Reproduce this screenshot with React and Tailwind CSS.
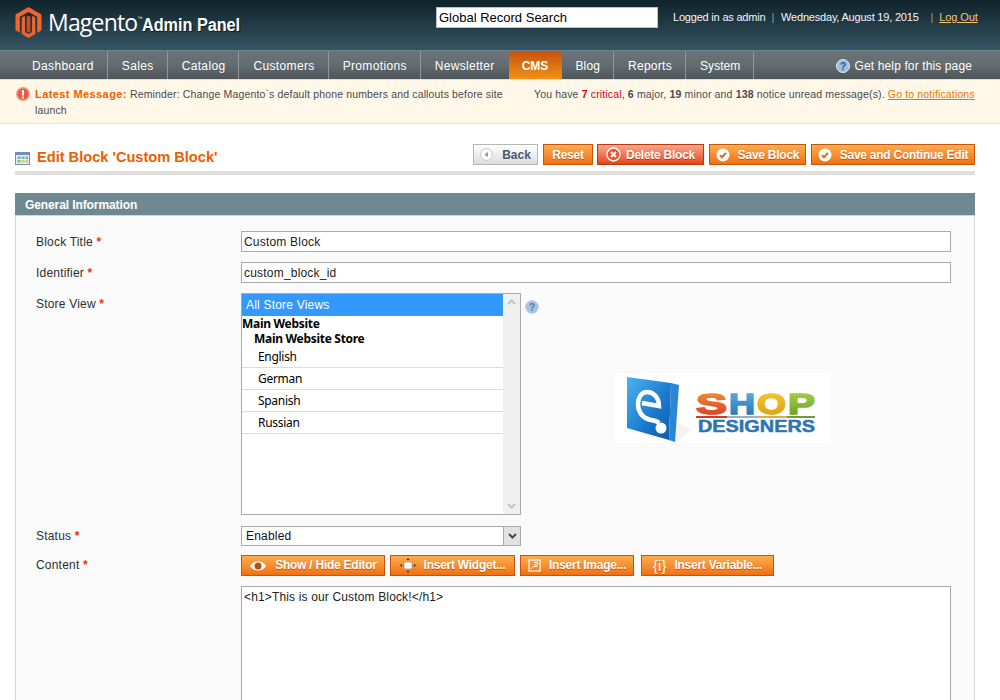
import React from "react";

function Check() {
  return (
    <svg width="14" height="14" viewBox="0 0 14 14" className="shrink-0">
      <circle cx="7" cy="7" r="6.500" fill="#fff" />
      <path d="M4 7.200l2 2 4-4.400" fill="none" stroke="#e8690f" strokeWidth="2" />
    </svg>
  );
}

function OrangeBtn({ children, icon, className = "" }) {
  return (
    <div className={"h-[21px] flex items-center justify-center gap-[8px] border border-[#c2560c] bg-gradient-to-b from-[#fdac4c] to-[#f0700d] text-white font-bold text-[12px] tracking-[-0.25px] whitespace-nowrap [text-shadow:0_1px_0_#c2560c] " + className}>
      {icon}
      <span>{children}</span>
    </div>
  );
}

function Label({ children, className = "" }) {
  return (
    <div className={"w-[205px] shrink-0 text-[12px] tracking-[0.2px] text-[#2f2f2f] " + className}>
      {children} <span className="text-[#eb340a] font-bold">*</span>
    </div>
  );
}

function NavItem({ children, className = "tracking-[0.35px]" }) {
  return (
    <div className={"pl-[14px] pr-[13px] pt-[1px] h-[28px] flex items-center border-r border-[#8e989c] text-[12px] text-white " + className}>
      {children}
    </div>
  );
}

function Logo() {
  return (
    <svg width="27" height="31" viewBox="0 0 28 32" className="shrink-0">
      <path d="M14 0L27.500 7.600V24L23 26.700V10L14 5 5 10V26.700L.5 24V7.600z" fill="#f1642a" />
      <path d="M14 32L7 28V10.800L10.300 9V26L14 28l3.700-2V9L21 10.800V28z" fill="#f1642a" />
      <path d="M12.200 9.500h3.600V25l-1.800 1-1.800-1z" fill="#e0481b" />
    </svg>
  );
}

function ShopLogo() {
  const fam = "'Liberation Sans', sans-serif";
  return (
    <svg width="215" height="70" viewBox="0 0 215 70" className="bg-white">
      <defs>
        <linearGradient id="box" x1="0" y1="0" x2="1" y2="1">
          <stop offset="0" stopColor="#4db4ef" />
          <stop offset="0.6" stopColor="#1878cc" />
          <stop offset="1" stopColor="#0f5ca8" />
        </linearGradient>
        <linearGradient id="sh" x1="0" y1="0" x2="0" y2="1">
          <stop offset="0" stopColor="#f59a3a" />
          <stop offset="1" stopColor="#d8341e" />
        </linearGradient>
        <linearGradient id="hh" x1="0" y1="0" x2="0" y2="1">
          <stop offset="0" stopColor="#5fb6e8" />
          <stop offset="1" stopColor="#1c6fb5" />
        </linearGradient>
        <linearGradient id="oo" x1="0" y1="0" x2="0" y2="1">
          <stop offset="0" stopColor="#f7cf36" />
          <stop offset="1" stopColor="#dc9a10" />
        </linearGradient>
        <linearGradient id="pp" x1="0" y1="0" x2="0" y2="1">
          <stop offset="0" stopColor="#b6d64a" />
          <stop offset="1" stopColor="#5e9c24" />
        </linearGradient>
      </defs>
      <path d="M30 60L62 69 76 56 62 50z" fill="#d8d8d8" opacity="0.3" />
      <path d="M12 4L56 10 54 67 12 55z" fill="url(#box)" />
      <path d="M56 10L64 12 60 69 54 67z" fill="#2a86d6" />
      <path d="M27 30L44 33C44 24 38 19 32 19 26 19 23 25 23 31 23 40 29 46 36 47 40 47.500 42 48 44 50" fill="none" stroke="#fff" strokeWidth="4.500" />
      <circle cx="46" cy="55" r="5.500" fill="#fff" />
      <g fontFamily={fam} fontWeight="700" fontSize="30" strokeWidth="1.600">
        <text x="81" y="41" textLength="31" lengthAdjust="spacingAndGlyphs" fill="url(#sh)" stroke="url(#sh)">S</text>
        <text x="114" y="41" textLength="26" lengthAdjust="spacingAndGlyphs" fill="url(#hh)" stroke="url(#hh)">H</text>
        <text x="142" y="41" textLength="29" lengthAdjust="spacingAndGlyphs" fill="url(#oo)" stroke="url(#oo)">O</text>
        <text x="173" y="41" textLength="27" lengthAdjust="spacingAndGlyphs" fill="url(#pp)" stroke="url(#pp)">P</text>
      </g>
      <rect x="81" y="43" width="31" height="2" fill="#c8402a" />
      <rect x="112" y="43" width="30" height="2" fill="#9ab0c0" />
      <rect x="142" y="43" width="30" height="2" fill="#d2b050" />
      <rect x="172" y="43" width="28" height="2" fill="#6e9c3a" />
      <text x="83" y="59" fontFamily={fam} fontWeight="700" fontSize="16" textLength="117" lengthAdjust="spacingAndGlyphs" fill="#2c74b4" stroke="#2c74b4" strokeWidth="0.500">DESIGNERS</text>
    </svg>
  );
}

export default function App() {
  return (
    <div className="w-[1000px] h-[700px] overflow-hidden flex flex-col bg-white font-['Liberation_Sans',Arial,sans-serif]">
      {/* Header */}
      <div className="h-[51px] shrink-0 flex bg-gradient-to-b from-[#10232b] to-[#365563] border-b border-[#6a848d]">
        <div className="w-[436px] pl-[15px] pt-[7px] flex items-start gap-[6px]">
          <Logo />
          <div className="flex items-baseline text-white">
            <span className="font-['Open_Sans',sans-serif] text-[23px] leading-[30px] tracking-[-0.8px]">Magento</span>
            <span className="text-[5px] self-start mt-[8px]">™</span>
            <span className="font-bold text-[18px] origin-left scale-x-[0.9] whitespace-nowrap [text-shadow:1px_1px_1px_#0b1a20]">Admin Panel</span>
          </div>
        </div>
        <div className="w-[222px] h-[21px] mt-[7px] bg-white border border-[#b9c3c7] pl-[2px] flex items-center text-[13px] text-black">Global Record Search</div>
        <div className="ml-[15px] mt-[11px] flex text-[11px] leading-[13px] text-[#f2f5f6] tracking-[-0.2px] whitespace-nowrap">
          <span>Logged in as admin</span>
          <span className="ml-[6px] mr-[7px] text-[#8ba0a8]">|</span>
          <span>Wednesday, August 19, 2015</span>
          <span className="ml-[12px] mr-[6px] text-[#8ba0a8]">|</span>
          <span className="text-[#f6c56b] underline tracking-[-0.1px]">Log Out</span>
        </div>
      </div>

      {/* Nav */}
      <div className="h-[29px] shrink-0 flex items-start pl-[18px] pr-[28px] bg-gradient-to-b from-[#697378] via-[#626c71] to-[#4e5559] border-b border-[#e4e0d4]">
        <NavItem>Dashboard</NavItem>
        <NavItem>Sales</NavItem>
        <NavItem>Catalog</NavItem>
        <NavItem>Customers</NavItem>
        <NavItem>Promotions</NavItem>
        <div className="pl-[14px] pr-[14px] pt-[1px] h-[28px] flex items-center text-[12px] tracking-[0.3px] text-white">Newsletter</div>
        <div className="w-[53px] pt-[1px] h-[28px] flex items-center justify-center bg-gradient-to-b from-[#c9500c] to-[#ef9118] text-white font-bold text-[12px]">CMS</div>
        <NavItem className="tracking-[0.1px]">Blog</NavItem>
        <NavItem className="tracking-[0.3px]">Reports</NavItem>
        <NavItem className="tracking-[0.05px]">System</NavItem>
        <div className="ml-auto pt-[1px] h-[28px] flex items-center gap-[5px] text-[12px] tracking-[0.12px] text-white">
          <svg width="14" height="14" viewBox="0 0 14 14">
            <circle cx="7" cy="7" r="6.500" fill="#9dbde2" stroke="#dfe9f5" />
            <text x="7" y="10.500" textAnchor="middle" fontSize="10" fontWeight="700" fill="#2b5a93" fontFamily="'Liberation Sans', sans-serif">?</text>
          </svg>
          <span>Get help for this page</span>
        </div>
      </div>

      {/* Notice */}
      <div className="h-[44px] shrink-0 flex bg-[#fff8e9] border-b border-[#ece6d6] pl-[16px] pr-[25px] pt-[6px] text-[10.5px] leading-[16px] tracking-[0.15px] text-[#494949]">
        <svg width="14" height="14" viewBox="0 0 14 14" className="shrink-0 mt-[1px]">
          <circle cx="7" cy="7" r="7" fill="#ec9c8a" />
          <circle cx="7" cy="7" r="5.500" fill="#ee5a3d" />
          <rect x="6" y="3" width="2" height="5.500" fill="#fff" />
          <rect x="6" y="9.500" width="2" height="2" fill="#fff" />
        </svg>
        <div className="w-[499px] pr-[20px] shrink-0 ml-[5px]">
          <span className="font-bold text-[#eb5e00] text-[11px] tracking-[0.42px]">Latest Message:</span> Reminder: Change Magento`s default phone numbers and callouts before site launch
        </div>
        <div className="whitespace-nowrap tracking-[0.15px]">
          You have <b className="text-[#d70017]">7</b> <span className="text-[#d70017]">critical</span>, <b>6</b> major, <b>19</b> minor and <b>138</b> notice unread message(s). <span className="text-[#ea7601] underline">Go to notifications</span>
        </div>
      </div>

      {/* Main */}
      <div className="flex-1 min-h-0 flex flex-col pl-[15px] pr-[25px] pt-[20px]">
        <div className="h-[31px] shrink-0 flex items-start border-b-4 border-[#dfdfdf]">
          <div className="flex items-center gap-[7px] h-[28px]">
            <svg width="15" height="13" viewBox="0 0 15 13">
              <rect x="0.500" y="0.500" width="14" height="12" fill="#e7eef7" stroke="#6f90bd" />
              <rect x="1" y="1" width="13" height="2" fill="#6f90bd" />
              <rect x="2.500" y="4.500" width="3" height="2.500" fill="#76a8d8" />
              <rect x="6.500" y="4.500" width="3" height="2.500" fill="#8cbb66" />
              <rect x="10.500" y="4.500" width="2.500" height="2.500" fill="#76a8d8" />
              <rect x="2.500" y="8" width="3" height="2.500" fill="#8cbb66" />
              <rect x="6.500" y="8" width="3" height="2.500" fill="#e9c75f" />
              <rect x="10.500" y="8" width="2.500" height="2.500" fill="#e9c75f" />
            </svg>
            <span className="text-[#eb5e00] font-bold text-[14.6px]">Edit Block 'Custom Block'</span>
          </div>
          <div className="ml-auto flex gap-[5px]">
            <div className="w-[65px] h-[21px] flex items-center justify-center gap-[9px] border border-[#b6b6b6] bg-gradient-to-b from-[#ffffff] to-[#dcdcdc] text-[#4c5a66] font-bold text-[12px]">
              <svg width="13" height="13" viewBox="0 0 13 13">
                <circle cx="6.500" cy="6.500" r="6" fill="#fbfbfb" stroke="#c8c8c8" />
                <path d="M8 3.800v5.400L4.400 6.500z" fill="#9a9a9a" />
              </svg>
              <span>Back</span>
            </div>
            <OrangeBtn className="w-[50px]">Reset</OrangeBtn>
            <div className="w-[107px] ml-[-1px] h-[21px] flex items-center justify-center gap-[5px] border border-[#b93a0c] bg-gradient-to-b from-[#f8a58b] to-[#e5420b] text-white font-bold text-[12px] tracking-[-0.25px] whitespace-nowrap [text-shadow:0_1px_0_#b93a0c]">
              <svg width="15" height="15" viewBox="0 0 15 15">
                <circle cx="7.500" cy="7.500" r="6.500" fill="#e8552a" stroke="#fff" strokeWidth="1.400" />
                <path d="M5 5l5 5M10 5l-5 5" stroke="#fff" strokeWidth="2" />
              </svg>
              <span>Delete Block</span>
            </div>
            <OrangeBtn className="w-[97px]" icon={<Check />}>Save Block</OrangeBtn>
            <OrangeBtn className="w-[164px]" icon={<Check />}>Save and Continue Edit</OrangeBtn>
          </div>
        </div>

        <div className="mt-[18px] h-[22px] shrink-0 flex items-center pl-[10px] pt-[1px] bg-[#6f8992] text-white font-bold text-[12px] tracking-[-0.1px]">General Information</div>

        <div className="flex-1 min-h-0 flex flex-col border-x border-t border-[#d6d6d6] bg-[#fafafa] pl-[20px] pr-[23px] pt-[15px]">
          <div className="flex h-[21px] leading-[19px]">
            <Label className="pt-[2px]">Block Title</Label>
            <div className="flex-1 h-[21px] bg-white border border-[#aaaaaa] pl-[2px] pt-[1px] flex items-center text-[12px] tracking-[0.2px] text-[#222]">Custom Block</div>
          </div>
          <div className="flex h-[21px] mt-[10px] leading-[19px]">
            <Label className="pt-[2px]">Identifier</Label>
            <div className="flex-1 h-[21px] bg-white border border-[#aaaaaa] pl-[2px] pt-[1px] flex items-center text-[12px] tracking-[0.2px] text-[#222]">custom_block_id</div>
          </div>
          <div className="flex h-[222px] mt-[10px] leading-[19px]">
            <Label className="pt-[2px]">Store View</Label>
            <div className="w-[280px] h-[222px] shrink-0 flex bg-white border border-[#aaaaaa]">
              <div className="flex-1 font-['Noto_Sans',sans-serif] text-[12px] tracking-[-0.3px] leading-[15px] text-black">
                <div className="h-[22px] bg-[#3399ff] text-white pl-[4px] flex items-center font-['Liberation_Sans',sans-serif] text-[12px] tracking-[0.2px]">All Store Views</div>
                <div className="font-bold">Main Website</div>
                <div className="pl-[12px] font-bold">Main Website Store</div>
                {["English", "German", "Spanish", "Russian"].map((s) => (
                  <div key={s} className="h-[22px] pl-[16px] flex items-center border-b border-[#dcdcdc]">{s}</div>
                ))}
              </div>
              <div className="w-[17px] shrink-0 flex flex-col justify-between items-center bg-[#f0f0f0] py-[5px]">
                <svg width="9" height="6" viewBox="0 0 9 6"><path d="M1 5l3.500-3.500L8 5" fill="none" stroke="#c2c2c2" strokeWidth="2" /></svg>
                <svg width="9" height="6" viewBox="0 0 9 6"><path d="M1 1l3.500 3.500L8 1" fill="none" stroke="#c2c2c2" strokeWidth="2" /></svg>
              </div>
            </div>
            <svg width="14" height="14" viewBox="0 0 14 14" className="ml-[4px] mt-[7px] shrink-0">
              <circle cx="7" cy="7" r="6.500" fill="#a9c1e2" stroke="#c6d6ec" />
              <text x="7" y="10.500" textAnchor="middle" fontSize="10" fontWeight="700" fill="#4f78ad" fontFamily="'Liberation Sans', sans-serif">?</text>
            </svg>
            <div className="ml-[76px] mt-[80px] self-start shrink-0 flex"><ShopLogo /></div>
          </div>
          <div className="flex h-[20px] mt-[11px] leading-[19px]">
            <Label className="pt-[1px]">Status</Label>
            <div className="w-[280px] h-[20px] flex bg-white border border-[#aaaaaa]">
              <div className="flex-1 pl-[4px] flex items-center text-[12px] tracking-[0.2px] text-[#111]">Enabled</div>
              <div className="w-[17px] bg-[#e2e2e2] border-l border-[#aaaaaa] flex items-center justify-center">
                <svg width="9" height="6" viewBox="0 0 9 6"><path d="M1 1l3.500 3.500L8 1" fill="none" stroke="#4a4a4a" strokeWidth="2" /></svg>
              </div>
            </div>
          </div>
          <div className="flex h-[21px] mt-[9px] leading-[19px]">
            <Label className="pt-[1px]">Content</Label>
            <div className="flex gap-[5px]">
              <OrangeBtn className="w-[144px]" icon={
                <svg width="18" height="12" viewBox="0 0 18 12">
                  <path d="M1 6c3-6 13-6 16 0-3 6-13 6-16 0z" fill="#fff" />
                  <circle cx="9" cy="6" r="3.500" fill="#b5500f" />
                </svg>
              }>Show / Hide Editor</OrangeBtn>
              <OrangeBtn className="w-[125px]" icon={
                <svg width="16" height="15" viewBox="0 0 16 15">
                  <rect x="4" y="4" width="8" height="7" fill="#f5f5f5" stroke="#888" strokeWidth="0.600" />
                  <path d="M8 0l1.500 2h-3zM8 15l1.500-2h-3zM0 7.500l2-1.500v3zM16 7.500l-2-1.500v3z" fill="#3a2a1a" />
                </svg>
              }>Insert Widget...</OrangeBtn>
              <OrangeBtn className="w-[114px]" icon={
                <svg width="13" height="13" viewBox="0 0 13 13">
                  <rect x="1" y="1" width="11" height="11" fill="none" stroke="#fff" strokeWidth="1.200" />
                  <path d="M3 10l3-3 2 1 2-4M6 3.500h4M6 6h2" fill="none" stroke="#fff" />
                </svg>
              }>Insert Image...</OrangeBtn>
              <OrangeBtn className="w-[133px] ml-[2px]" icon={
                <span className="font-normal text-[15px] tracking-[0px]">{"{i}"}</span>
              }>Insert Variable...</OrangeBtn>
            </div>
          </div>
          <div className="flex-1 min-h-0 flex mt-[10px]">
            <div className="w-[205px] shrink-0" />
            <div className="flex-1 bg-white border-x border-t border-[#aaaaaa] pl-[2px] pt-[2px] text-[12px] leading-[16px] tracking-[0.15px] text-[#222]">&lt;h1&gt;This is our Custom Block!&lt;/h1&gt;</div>
          </div>
        </div>
      </div>
    </div>
  );
}
